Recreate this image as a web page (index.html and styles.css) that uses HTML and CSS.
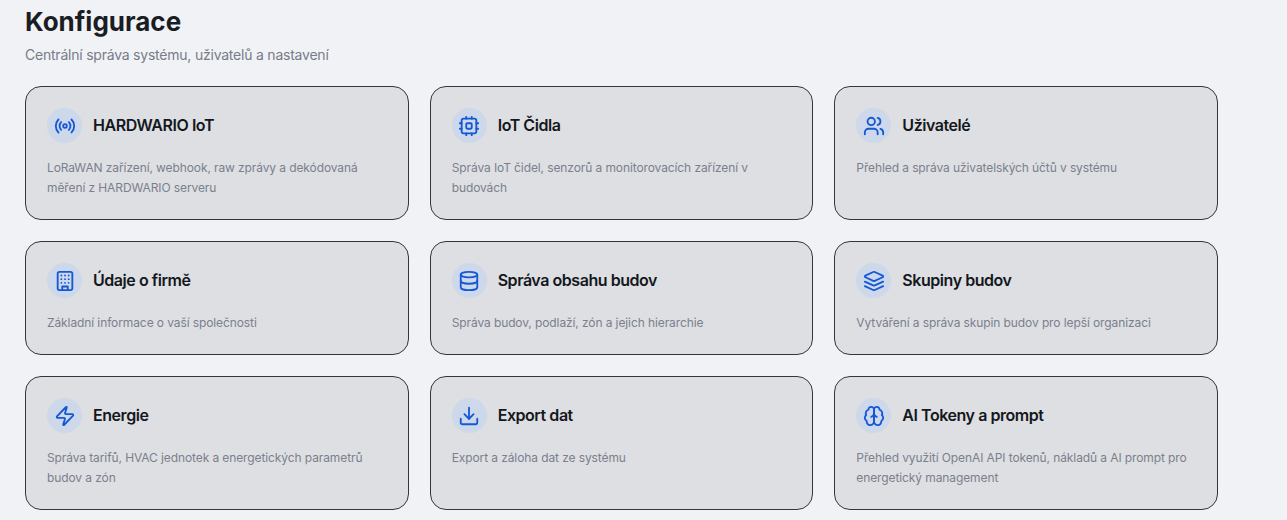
FILE: index.html
```html
<!DOCTYPE html>
<html lang="cs">
    <head>
        <title>Konfigurace</title>
        <meta charset="utf-8" />
        <meta name="viewport" content="width=device-width, initial-scale=1.0" />
        <link rel="stylesheet" href="styles.css">
    </head>
    <body>
        <div class="page">
            <h1 class="title">Konfigurace</h1>
            <p class="subtitle">Centrální správa systému, uživatelů a nastavení</p>
            <div class="grid">
                <a class="card">
                    <div class="card-head">
                        <span class="icon">
                            <svg viewBox="0 0 24 24"><path d="M4.9 19.1C1 15.2 1 8.8 4.9 4.9"/><path d="M7.8 16.2c-2.3-2.3-2.3-6.1 0-8.5"/><circle cx="12" cy="12" r="2"/><path d="M16.2 7.8c2.3 2.3 2.3 6.1 0 8.5"/><path d="M19.1 4.9C23 8.8 23 15.1 19.1 19"/></svg>
                        </span>
                        <h2>HARDWARIO IoT</h2>
                    </div>
                    <p>LoRaWAN zařízení, webhook, raw zprávy a dekódovaná měření z HARDWARIO serveru</p>
                </a>
                <a class="card">
                    <div class="card-head">
                        <span class="icon">
                            <svg viewBox="0 0 24 24"><rect x="4" y="4" width="16" height="16" rx="2"/><rect x="9" y="9" width="6" height="6" rx="1"/><path d="M15 2v2M15 20v2M2 15h2M2 9h2M20 15h2M20 9h2M9 2v2M9 20v2"/></svg>
                        </span>
                        <h2>IoT Čidla</h2>
                    </div>
                    <p>Správa IoT čidel, senzorů a monitorovacích zařízení v budovách</p>
                </a>
                <a class="card">
                    <div class="card-head">
                        <span class="icon">
                            <svg viewBox="0 0 24 24"><path d="M16 21v-2a4 4 0 0 0-4-4H6a4 4 0 0 0-4 4v2"/><circle cx="9" cy="7" r="4"/><path d="M22 21v-2a4 4 0 0 0-3-3.87"/><path d="M16 3.13a4 4 0 0 1 0 7.75"/></svg>
                        </span>
                        <h2>Uživatelé</h2>
                    </div>
                    <p>Přehled a správa uživatelských účtů v systému</p>
                </a>
                <a class="card">
                    <div class="card-head">
                        <span class="icon">
                            <svg viewBox="0 0 24 24"><rect x="4" y="2" width="16" height="20" rx="2"/><path d="M9 22v-4h6v4"/><path d="M8 6h.01M12 6h.01M16 6h.01M8 10h.01M12 10h.01M16 10h.01M8 14h.01M12 14h.01M16 14h.01"/></svg>
                        </span>
                        <h2>Údaje o firmě</h2>
                    </div>
                    <p>Základní informace o vaší společnosti</p>
                </a>
                <a class="card">
                    <div class="card-head">
                        <span class="icon">
                            <svg viewBox="0 0 24 24"><ellipse cx="12" cy="5" rx="9" ry="3"/><path d="M3 5V19A9 3 0 0 0 21 19V5"/><path d="M3 12A9 3 0 0 0 21 12"/></svg>
                        </span>
                        <h2>Správa obsahu budov</h2>
                    </div>
                    <p>Správa budov, podlaží, zón a jejich hierarchie</p>
                </a>
                <a class="card">
                    <div class="card-head">
                        <span class="icon">
                            <svg viewBox="0 0 24 24"><path d="m12.83 2.18a2 2 0 0 0-1.66 0L2.6 6.08a1 1 0 0 0 0 1.83l8.58 3.91a2 2 0 0 0 1.66 0l8.58-3.9a1 1 0 0 0 0-1.83Z"/><path d="m22 17.65-9.17 4.16a2 2 0 0 1-1.66 0L2 17.65"/><path d="m22 12.65-9.17 4.16a2 2 0 0 1-1.66 0L2 12.65"/></svg>
                        </span>
                        <h2>Skupiny budov</h2>
                    </div>
                    <p>Vytváření a správa skupin budov pro lepší organizaci</p>
                </a>
                <a class="card">
                    <div class="card-head">
                        <span class="icon">
                            <svg viewBox="0 0 24 24"><path d="M4 14a1 1 0 0 1-.78-1.63l9.9-10.2a.5.5 0 0 1 .86.46l-1.92 6.02A1 1 0 0 0 13 10h7a1 1 0 0 1 .78 1.63l-9.9 10.2a.5.5 0 0 1-.86-.46l1.92-6.02A1 1 0 0 0 11 14z"/></svg>
                        </span>
                        <h2>Energie</h2>
                    </div>
                    <p>Správa tarifů, HVAC jednotek a energetických parametrů budov a zón</p>
                </a>
                <a class="card">
                    <div class="card-head">
                        <span class="icon">
                            <svg viewBox="0 0 24 24"><path d="M21 15v4a2 2 0 0 1-2 2H5a2 2 0 0 1-2-2v-4"/><path d="M7 10l5 5 5-5"/><path d="M12 15V3"/></svg>
                        </span>
                        <h2>Export dat</h2>
                    </div>
                    <p>Export a záloha dat ze systému</p>
                </a>
                <a class="card">
                    <div class="card-head">
                        <span class="icon">
                            <svg viewBox="0 0 24 24"><path d="M12 5a3 3 0 1 0-5.997.125 4 4 0 0 0-2.526 5.77 4 4 0 0 0 .556 6.588A4 4 0 1 0 12 18Z"/><path d="M12 5a3 3 0 1 1 5.997.125 4 4 0 0 1 2.526 5.77 4 4 0 0 1-.556 6.588A4 4 0 1 1 12 18Z"/><path d="M15 13a4.5 4.5 0 0 1-3-4 4.5 4.5 0 0 1-3 4"/><path d="M12 5v13"/></svg>
                        </span>
                        <h2>AI Tokeny a prompt</h2>
                    </div>
                    <p>Přehled využití OpenAI API tokenů, nákladů a AI prompt pro energetický management</p>
                </a>
            </div>
        </div>
    </body>
</html>
```

FILE: styles.css
```css
html, body {
    margin: 0px;
    padding: 0px;
    background: #f1f2f6;
    font-family: "Inter", "Noto Sans", sans-serif;
}
.page {
    padding: 6px 69px 10px 25px;
}
.title {
    margin: 0px;
    color: #1a1d23;
    font-size: 26px;
    line-height: 32px;
    font-weight: 700;
}
.subtitle {
    margin: 8px 0px 0px;
    color: #777c89;
    font-size: 14px;
    line-height: 18px;
    letter-spacing: -0.22px;
}
.grid {
    display: grid;
    grid-template-columns: repeat(3, 1fr);
    gap: 21px;
    margin-top: 22px;
}
.card {
    display: block;
    box-sizing: border-box;
    padding: 21px;
    border: 1px solid #33363c;
    border-radius: 16px;
    background: #dddfe3;
}
.card-head {
    display: flex;
    align-items: center;
    gap: 11px;
    margin-bottom: 15px;
}
.card h2 {
    margin: 0px 0px 2px;
    color: #14171c;
    font-size: 16px;
    font-weight: 600;
    letter-spacing: -0.45px;
}
.card p {
    margin: 0px;
    color: #7b808c;
    font-size: 12px;
    line-height: 20px;
    letter-spacing: -0.1px;
}
.icon {
    display: flex;
    flex: none;
    align-items: center;
    justify-content: center;
    width: 35px;
    height: 35px;
    border-radius: 50%;
    background: #cdd8ea;
}
.icon svg {
    width: 22px;
    height: 22px;
    fill: none;
    stroke: #1558d6;
    stroke-width: 2;
    stroke-linecap: round;
    stroke-linejoin: round;
}
```
